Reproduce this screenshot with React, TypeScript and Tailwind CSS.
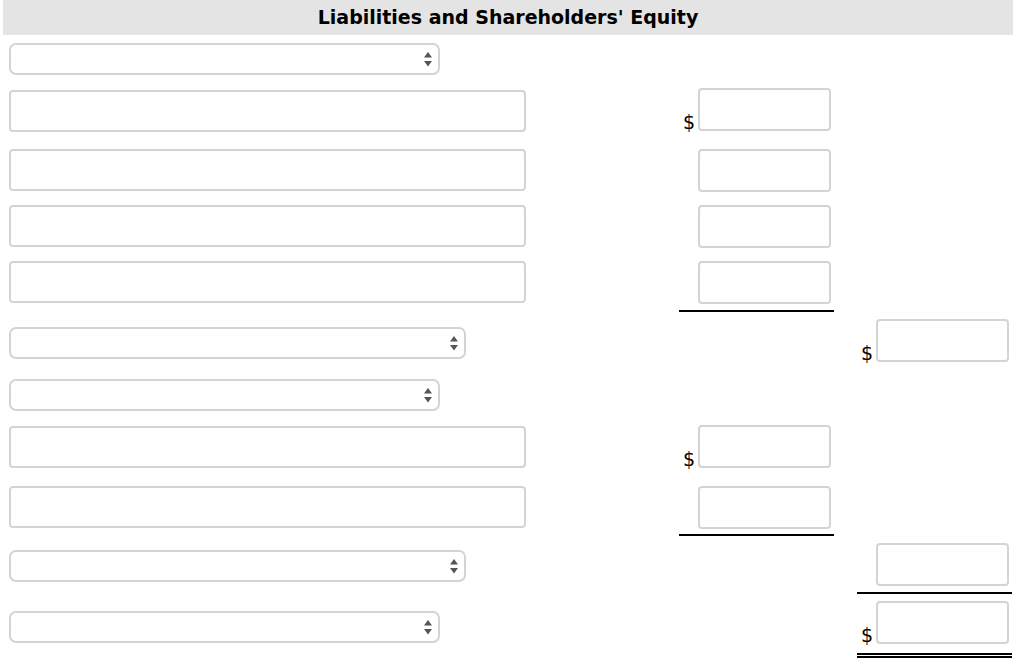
const font = { fontFamily: "'DejaVu Sans', Verdana, sans-serif" };

type Row = {
  h: string;
  kind: "select" | "text";
  selectW?: string;
  leftPt: string;
  col2?: { pt: string; dollar?: boolean; under?: boolean };
  col3?: { pt: string; dollar?: boolean; under?: "single" | "double" };
};

const rows: Row[] = [
  { h: "h-[47px]", kind: "select", selectW: "w-[431px]", leftPt: "pt-[8px]" },
  { h: "h-[58px]", kind: "text", leftPt: "pt-[8px]", col2: { pt: "pt-[6px]", dollar: true } },
  { h: "h-[58px]", kind: "text", leftPt: "pt-[9px]", col2: { pt: "pt-[9px]" } },
  { h: "h-[56px]", kind: "text", leftPt: "pt-[7px]", col2: { pt: "pt-[7px]" } },
  { h: "h-[58px]", kind: "text", leftPt: "pt-[7px]", col2: { pt: "pt-[7px]", under: true } },
  {
    h: "h-[56px]",
    kind: "select",
    selectW: "w-[457px]",
    leftPt: "pt-[15px]",
    col3: { pt: "pt-[7px]", dollar: true },
  },
  { h: "h-[50px]", kind: "select", selectW: "w-[431px]", leftPt: "pt-[11px]" },
  { h: "h-[60px]", kind: "text", leftPt: "pt-[8px]", col2: { pt: "pt-[7px]", dollar: true } },
  { h: "h-[58px]", kind: "text", leftPt: "pt-[8px]", col2: { pt: "pt-[8px]", under: true } },
  {
    h: "h-[58px]",
    kind: "select",
    selectW: "w-[457px]",
    leftPt: "pt-[14px]",
    col3: { pt: "pt-[7px]", under: "single" },
  },
  {
    h: "h-[66px]",
    kind: "select",
    selectW: "w-[431px]",
    leftPt: "pt-[17px]",
    col3: { pt: "pt-[7px]", dollar: true, under: "double" },
  },
];

const SelectBox = ({ width }: { width: string }) => (
  <div
    className={`${width} h-[32px] border-2 border-[#d4d4d4] rounded-[7px] bg-white flex items-center justify-end pr-[6px]`}
  >
    <svg width="8" height="15" viewBox="0 0 8 15">
      <polygon points="4,0 8,5.5 0,5.5" fill="#555" />
      <polygon points="0,9 8,9 4,14.5" fill="#555" />
    </svg>
  </div>
);

const AmountBox = ({ dollar }: { dollar?: boolean }) => (
  <div className="flex items-end justify-end pr-[3px]">
    {dollar && (
      <span className="text-[19px] leading-none text-black mr-[3px] mb-[-1px]" style={font}>
        $
      </span>
    )}
    <div className="w-[133px] h-[43px] border-2 border-[#d4d4d4] rounded-[4px] bg-white" />
  </div>
);

export default function App() {
  return (
    <div className="w-[1024px] h-[668px] bg-white px-[3px]" style={font}>
      {/* Header */}
      <div className="w-[1010px] h-[35px] bg-[#e4e4e4] flex items-center justify-center">
        <h1 className="text-[19px] font-bold text-black">Liabilities and Shareholders' Equity</h1>
      </div>

      {rows.map((row, i) => (
        <div key={i} className={`flex ${row.h}`}>
          {/* Label cell */}
          <div className={`w-[676px] pl-[6px] ${row.leftPt}`}>
            {row.kind === "select" ? (
              <SelectBox width={row.selectW ?? "w-[431px]"} />
            ) : (
              <div className="w-[517px] h-[42px] border-2 border-[#d4d4d4] rounded-[4px] bg-white" />
            )}
          </div>

          {/* First amount column */}
          <div
            className={`w-[155px] h-full ${row.col2?.pt ?? ""} ${
              row.col2?.under ? "border-b-2 border-black" : ""
            }`}
          >
            {row.col2 && <AmountBox dollar={row.col2.dollar} />}
          </div>

          <div className="w-[23px]" />

          {/* Second amount column */}
          <div className={`w-[155px] h-full flex flex-col ${row.col3?.pt ?? ""}`}>
            {row.col3 && <AmountBox dollar={row.col3.dollar} />}
            <div className="flex-1" />
            {row.col3?.under === "single" && <div className="h-[2px] bg-black" />}
            {row.col3?.under === "double" && (
              <div className="mb-[2px]">
                <div className="h-[2px] bg-black" />
                <div className="h-[1px]" />
                <div className="h-[2px] bg-black" />
              </div>
            )}
          </div>
        </div>
      ))}
    </div>
  );
}
